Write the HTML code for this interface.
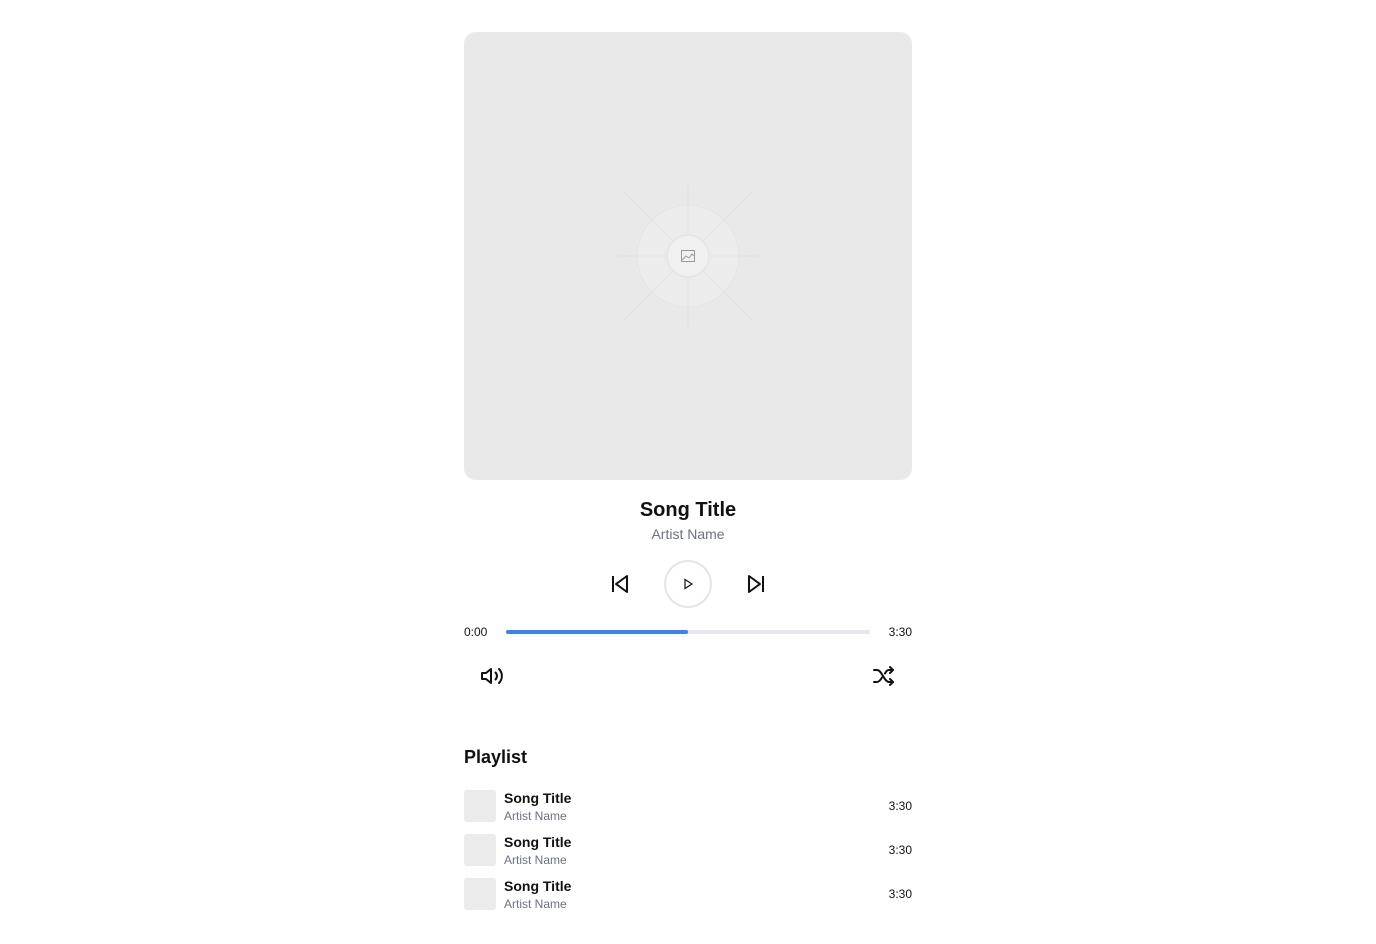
<!DOCTYPE html>
<html><head><style>
body{margin:0;width:1376px;height:944px;background:#fff;font-family:"Liberation Sans",sans-serif;position:relative;overflow:hidden}
.a{position:absolute}
.t{color:#111}
.g{color:#6b7280}
</style></head><body>
<div class="a" style="left:464px;top:32px;width:448px;height:448px;background:#e9e9e9;border-radius:12px"></div>
<svg class="a" style="left:608px;top:176px" width="160" height="160" viewBox="-80 -80 160 160">
<g stroke="#e0e0e0" stroke-width="1">
<line x1="-70" y1="0" x2="70" y2="0"/><line x1="0" y1="-70" x2="0" y2="70"/>
<line x1="-64" y1="-64" x2="64" y2="64"/><line x1="-64" y1="64" x2="64" y2="-64"/>
</g>
<circle r="51" fill="#ececec" stroke="#e4e4e4"/>
<g stroke="#e4e4e4"><line x1="-51" y1="0" x2="51" y2="0"/><line x1="0" y1="-51" x2="0" y2="51"/><line x1="-36" y1="-36" x2="36" y2="36"/><line x1="-36" y1="36" x2="36" y2="-36"/></g>
<circle r="21" fill="#f0f0f0" stroke="#e2e2e2"/>
<rect x="-6.5" y="-5.5" width="13" height="11" fill="none" stroke="#999" stroke-width="1"/>
<path d="M-6 4 L-2 0 L1 2 L4 -2 L6 0" fill="none" stroke="#999" stroke-width="1"/>
</svg>
<div class="a t" style="left:464px;width:448px;top:499px;text-align:center;font-size:20px;font-weight:bold">Song Title</div>
<div class="a g" style="left:464px;width:448px;top:526px;text-align:center;font-size:14px">Artist Name</div>
<svg class="a" style="left:608px;top:572px" width="24" height="24" viewBox="0 0 24 24" fill="none" stroke="#111" stroke-width="2" stroke-linejoin="round"><line x1="5" y1="4" x2="5" y2="20"/><path d="M19 4 L8 12 L19 20 Z"/></svg>
<div class="a" style="left:664px;top:560px;width:44px;height:44px;border:2px solid #e5e5e5;border-radius:50%"></div>
<svg class="a" style="left:681px;top:577px" width="14" height="14" viewBox="0 0 14 14" fill="none" stroke="#111" stroke-width="1.2"><path d="M4 2.5 L11 7 L4 11.5 Z"/></svg>
<svg class="a" style="left:744px;top:572px" width="24" height="24" viewBox="0 0 24 24" fill="none" stroke="#111" stroke-width="2" stroke-linejoin="round"><line x1="19" y1="4" x2="19" y2="20"/><path d="M5 4 L16 12 L5 20 Z"/></svg>
<div class="a t" style="left:464px;top:625px;font-size:12px">0:00</div>
<div class="a t" style="left:880px;width:32px;text-align:right;top:625px;font-size:12px">3:30</div>
<div class="a" style="left:506px;top:630px;width:364px;height:4px;background:#e5e7eb;border-radius:2px"></div>
<div class="a" style="left:506px;top:630px;width:182px;height:4px;background:#3b82f6;border-radius:2px"></div>
<svg class="a" style="left:480px;top:664px" width="24" height="24" viewBox="0 0 24 24" fill="none" stroke="#111" stroke-width="2" stroke-linejoin="round" stroke-linecap="round"><path d="M11 5 L6 9 H2 V15 H6 L11 19 Z"/><path d="M15.5 8.5 a5 5 0 0 1 0 7"/><path d="M19 5 a10 10 0 0 1 0 14"/></svg>
<svg class="a" style="left:872px;top:664px" width="24" height="24" viewBox="0 0 24 24" fill="none" stroke="#111" stroke-width="2" stroke-linejoin="round" stroke-linecap="round"><path d="M2 6 H5 C10 6 12 18 17 18 H21"/><path d="M2 18 H5 C7 18 8.5 16 10 13.5"/><path d="M13 9.5 C14 7.5 15.5 6 17 6 H21"/><path d="M18 3 L21 6 L18 9"/><path d="M18 15 L21 18 L18 21"/></svg>
<div class="a t" style="left:464px;top:747px;font-size:18px;font-weight:bold">Playlist</div>
<div class="a" style="left:464px;top:790px;width:32px;height:32px;background:#ebebeb;border-radius:3px"></div>
<div class="a t" style="left:504px;top:790px;font-size:14px;font-weight:bold">Song Title</div>
<div class="a g" style="left:504px;top:809px;font-size:12px">Artist Name</div>
<div class="a t" style="left:880px;width:32px;text-align:right;top:799px;font-size:12px">3:30</div>
<div class="a" style="left:464px;top:834px;width:32px;height:32px;background:#ebebeb;border-radius:3px"></div>
<div class="a t" style="left:504px;top:834px;font-size:14px;font-weight:bold">Song Title</div>
<div class="a g" style="left:504px;top:853px;font-size:12px">Artist Name</div>
<div class="a t" style="left:880px;width:32px;text-align:right;top:843px;font-size:12px">3:30</div>
<div class="a" style="left:464px;top:878px;width:32px;height:32px;background:#ebebeb;border-radius:3px"></div>
<div class="a t" style="left:504px;top:878px;font-size:14px;font-weight:bold">Song Title</div>
<div class="a g" style="left:504px;top:897px;font-size:12px">Artist Name</div>
<div class="a t" style="left:880px;width:32px;text-align:right;top:887px;font-size:12px">3:30</div>
</body></html>
